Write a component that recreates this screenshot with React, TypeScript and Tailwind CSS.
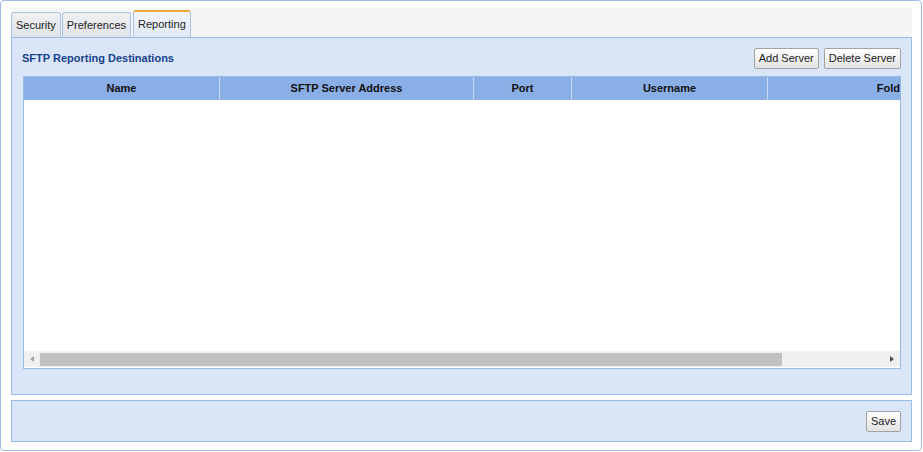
import React from "react";

const font = { fontFamily: '"Liberation Sans", Arial, sans-serif' };

function Btn({ children, className = "" }: { children: React.ReactNode; className?: string }) {
  return (
    <button
      className={`h-[21px] px-[4px] rounded-[2px] border border-[#a3a3a3] bg-gradient-to-b from-[#ffffff] to-[#e3e3e3] text-[11px] text-[#222] leading-none ${className}`}
    >
      {children}
    </button>
  );
}

export default function App() {
  const cols = [
    { name: "Name", w: 195 },
    { name: "SFTP Server Address", w: 254 },
    { name: "Port", w: 98 },
    { name: "Username", w: 196 },
    { name: "Folder", w: 252 },
  ];
  return (
    <div style={font} className="w-[923px] h-[452px] bg-white p-0">
      <div className="w-[922px] h-[451px] border border-[#9dbbe6] rounded-[4px] bg-white pt-[7px] pl-[10px] pr-[9px] flex flex-col">
        {/* tab strip */}
        <div className="h-[29px] bg-[#f5f5f5] flex items-end gap-[1px] pl-0">
          <div className="h-[25px] px-[4px] flex items-center border border-b-0 border-[#a9c2e6] rounded-t-[3px] bg-gradient-to-b from-[#f0f0f0] to-[#dfe3ea] text-[11px] text-[#222]">
            Security
          </div>
          <div className="h-[25px] px-[4px] flex items-center border border-b-0 border-[#a9c2e6] rounded-t-[3px] bg-gradient-to-b from-[#f0f0f0] to-[#dfe3ea] text-[11px] text-[#222]">
            Preferences
          </div>
          <div className="ml-[1px] h-[27px] px-[4px] flex items-center border border-b-0 border-[#a9c2e6] border-t-[2px] border-t-[#f0a83a] rounded-t-[3px] bg-gradient-to-b from-[#f4f6fa] to-[#e2e9f4] text-[11px] text-[#222]">
            Reporting
          </div>
        </div>
        {/* main panel */}
        <div className="h-[358px] border border-[#99bbe8] bg-[#dae6f8] pl-[11px] pr-[10px] pt-[10px] flex flex-col">
          <div className="flex items-center justify-between h-[21px]">
            <div className="text-[11px] font-bold text-[#15428b] -ml-[1px]">SFTP Reporting Destinations</div>
            <div className="flex gap-[5px]">
              <Btn>Add Server</Btn>
              <Btn>Delete Server</Btn>
            </div>
          </div>
          <div className="mt-[7px] h-[293px] border border-[#99bbe8] bg-white flex flex-col overflow-hidden">
            <div className="flex h-[23px] bg-[#8aaee6] overflow-hidden shrink-0">
              {cols.map((c, i) => (
                <div
                  key={c.name}
                  style={{ width: c.w }}
                  className={`shrink-0 flex items-center justify-center text-[11px] font-bold text-[#111] ${i > 0 ? "border-l border-[#c9d9f3]" : ""}`}
                >
                  {c.name}
                </div>
              ))}
            </div>
            <div className="flex-1" />
            <div className="h-[16px] bg-[#f0f0f0] flex items-center px-[4px] mb-[1px]">
              <svg width="8" height="8" viewBox="0 0 8 8" className="shrink-0">
                <path d="M6 1 L2 4 L6 7 Z" fill="#a3a3a3" />
              </svg>
              <div className="ml-[4px] w-[742px] h-[13px] bg-[#c1c1c1]" />
              <div className="flex-1" />
              <svg width="8" height="8" viewBox="0 0 8 8" className="shrink-0">
                <path d="M2 1 L6 4 L2 7 Z" fill="#505050" />
              </svg>
            </div>
          </div>
        </div>
        {/* bottom panel */}
        <div className="mt-[5px] h-[42px] border border-[#99bbe8] bg-[#dae6f8] flex items-center justify-end pr-[10px]">
          <Btn>Save</Btn>
        </div>
      </div>
    </div>
  );
}
